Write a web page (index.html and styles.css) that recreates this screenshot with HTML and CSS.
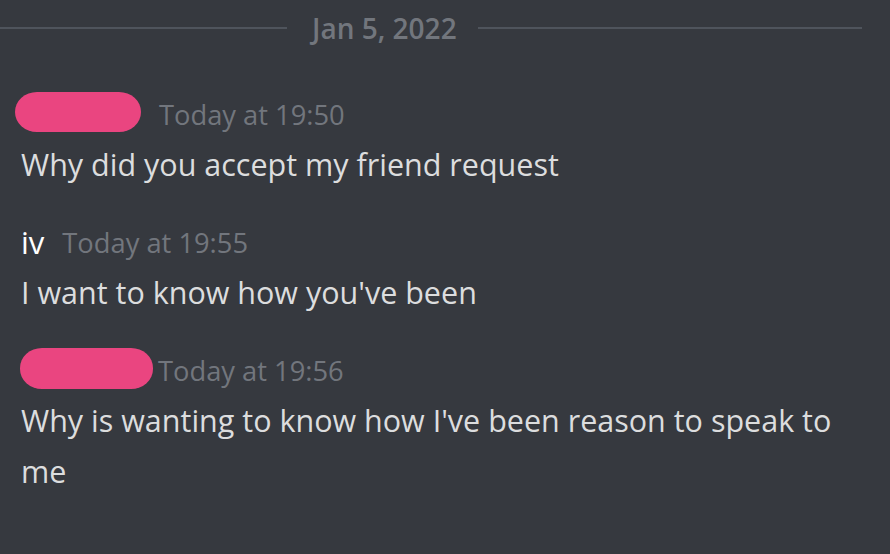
FILE: index.html
```html
<!DOCTYPE html>
<html>
<head>
<meta charset="utf-8">
<link rel="stylesheet" href="styles.css">
</head>
<body>
<div class="chat">
  <div class="divider">
    <span class="divider-line left"></span>
    <span class="divider-text">Jan 5, 2022</span>
    <span class="divider-line right"></span>
  </div>
  <div class="message first">
    <div class="header">
      <span class="redact redact-a"></span>
      <span class="time">Today at 19:50</span>
    </div>
    <div class="body">Why did you accept my friend request</div>
  </div>
  <div class="message">
    <div class="header">
      <span class="name">iv</span>
      <span class="time">Today at 19:55</span>
    </div>
    <div class="body">I want to know how you've been</div>
  </div>
  <div class="message">
    <div class="header">
      <span class="redact redact-b"></span>
      <span class="time">Today at 19:56</span>
    </div>
    <div class="body">Why is wanting to know how I've been reason to speak to me</div>
  </div>
</div>
</body>
</html>
```
FILE: styles.css
```css
html, body {
  margin: 0;
  padding: 0;
  background: #36393f;
  height: 100%;
}
body {
  font-family: "Open Sans", Lato, sans-serif;
  overflow: hidden;
}
.chat {
  width: 890px;
}
.divider {
  display: flex;
  align-items: center;
  height: 56px;
  margin-right: 28px;
}
.divider-line {
  height: 2px;
  background: #4f545c;
}
.divider-line.left {
  flex: 0 0 287px;
}
.divider-line.right {
  flex: 1;
}
.divider-text {
  padding: 0 21px 0 25px;
  color: #72767d;
  font-size: 28px;
  font-weight: 600;
  line-height: 56px;
}
.message {
  padding-left: 21px;
  margin-top: 31px;
  width: 845px;
}
.message.first {
  margin-top: 37px;
}
.header {
  display: flex;
  align-items: center;
  height: 43px;
  line-height: 43px;
}
.name {
  color: #ffffff;
  font-size: 31px;
  font-weight: 500;
  margin-right: 18px;
}
.time {
  color: #72767d;
  font-size: 27.3px;
}
.redact {
  display: inline-block;
  background: #ea4580;
  border-radius: 22px / 20px;
}
.redact-a {
  width: 126px;
  height: 40px;
  margin-left: -6px;
  margin-right: 18px;
  transform: translateY(-3px);
}
.redact-b {
  width: 133px;
  height: 41px;
  margin-left: -1px;
  margin-right: 5px;
  transform: translateY(-2px);
}
.body {
  color: #dcddde;
  font-size: 30.5px;
  line-height: 51px;
  padding-top: 3px;
}
```
